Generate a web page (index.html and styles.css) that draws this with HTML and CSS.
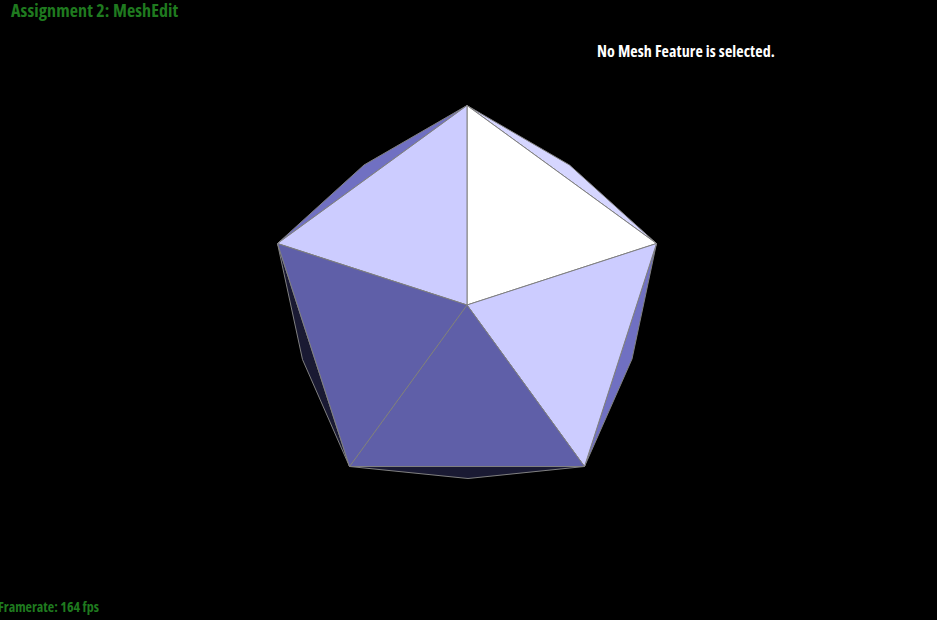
FILE: index.html
```html
<!DOCTYPE html>
<html lang="en">
<head>
<meta charset="utf-8">
<title>Assignment 2: MeshEdit</title>
<link rel="stylesheet" href="styles.css">
</head>
<body>
<main class="viewport">
  <svg class="mesh" viewBox="0 0 937 620" width="937" height="620" aria-hidden="true">
    <g class="edges">
      <polygon class="back-light" points="467,105.5 569.5,165 656.5,243.5"/>
      <polygon class="back-mid" points="467,105.5 364,165 277.5,243.5"/>
      <polygon class="back-mid" points="656.5,243.5 632,359 584.5,466.5"/>
      <polygon class="back-dark" points="277.5,243.5 302.5,359.5 349.5,466.5"/>
      <polygon class="back-dark" points="349.5,466.5 468,478.5 584.5,466.5"/>
      <polygon class="face-white" points="467,305 467,105.5 656.5,243.5"/>
      <polygon class="face-light" points="467,305 656.5,243.5 584.5,466.5"/>
      <polygon class="face-light" points="467,305 277.5,243.5 467,105.5"/>
      <polygon class="face-shade" points="467,305 584.5,466.5 349.5,466.5"/>
      <polygon class="face-shade" points="467,305 349.5,466.5 277.5,243.5"/>
    </g>
  </svg>
  <h1 class="label title">Assignment 2: MeshEdit</h1>
  <p class="label status">No Mesh Feature is selected.</p>
  <p class="label framerate">Framerate: 164 fps</p>
</main>
</body>
</html>
```
FILE: styles.css
```css
html, body {
  margin: 0;
  padding: 0;
  background: #000;
}

.viewport {
  position: relative;
  width: 937px;
  height: 620px;
  overflow: hidden;
  background: #000;
}

.mesh {
  display: block;
}

.edges polygon {
  stroke: #808080;
  stroke-width: 1;
  stroke-linejoin: round;
}

.face-white { fill: #fff; }
.face-light { fill: #ccccff; }
.face-shade { fill: #5f5fa8; }
.back-light { fill: #d6d6ff; }
.back-mid { fill: #7070c2; }
.back-dark { fill: #1a1a33; }

.label {
  position: absolute;
  margin: 0;
  font-family: "Open Sans", sans-serif;
  font-weight: 700;
  font-stretch: 75%;
  white-space: nowrap;
}

.title {
  left: 11px;
  top: 0;
  font-size: 18px;
  line-height: 20px;
  letter-spacing: 0.1px;
  color: #1f7a1f;
}

.status {
  left: 597px;
  top: 41px;
  font-size: 16px;
  line-height: 20px;
  letter-spacing: 0.09px;
  color: #fff;
}

.framerate {
  left: -2px;
  top: 598px;
  font-size: 14px;
  line-height: 18px;
  color: #1f7a1f;
}
```
